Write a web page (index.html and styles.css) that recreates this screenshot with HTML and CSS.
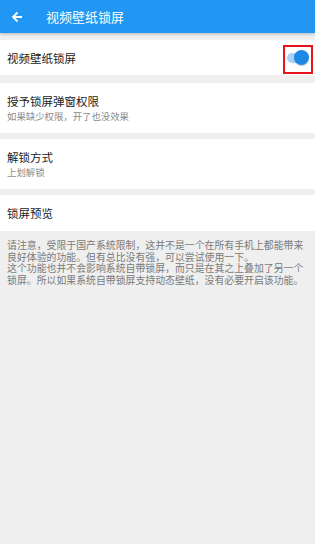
FILE: index.html
```html
<!DOCTYPE html>
<html lang="zh-CN">
<head>
<meta charset="utf-8">
<link rel="stylesheet" href="styles.css">
</head>
<body>
<div class="app">
  <header class="bar">
    <svg class="back" width="12" height="12" viewBox="0 0 12 12"><path d="M11 6H2M6.5 1.5L2 6l4.5 4.5" fill="none" stroke="#fff" stroke-width="1.8"/></svg>
    <div class="bar-title">视频壁纸锁屏</div>
  </header>
  <div class="row row-switch">
    <div class="title">视频壁纸锁屏</div>
    <div class="switch"><span class="track"></span><span class="knob"></span><span class="mark"></span></div>
  </div>
  <div class="row row-two gap8">
    <div class="title">授予锁屏弹窗权限</div>
    <div class="sub">如果缺少权限，开了也没效果</div>
  </div>
  <div class="row row-two">
    <div class="title">解锁方式</div>
    <div class="sub">上划解锁</div>
  </div>
  <div class="row row-one">
    <div class="title">锁屏预览</div>
  </div>
  <p class="note">请注意，受限于国产系统限制，这并不是一个在所有手机上都能带来良好体验的功能。但有总比没有强，可以尝试使用一下。<br>这个功能也并不会影响系统自带锁屏，而只是在其之上叠加了另一个锁屏。所以如果系统自带锁屏支持动态壁纸，没有必要开启该功能。</p>
</div>
</body>
</html>
```
FILE: styles.css
```css
html, body {
  margin: 0;
  padding: 0;
  background: #efefef;
}
body {
  font-family: "Noto Sans CJK SC", "Noto Sans", sans-serif;
  width: 315px;
  height: 544px;
  overflow: hidden;
}
.app {
  display: flex;
  flex-direction: column;
}
.bar {
  height: 33px;
  background: #2196f3;
  display: flex;
  align-items: center;
  box-shadow: 0 1px 3px rgba(0,0,0,0.25);
  position: relative;
  z-index: 1;
}
.back {
  margin-left: 11px;
  margin-top: 1px;
}
.bar-title {
  color: #fff;
  font-size: 13px;
  margin-left: 23px;
  line-height: 1;
}
.row {
  background: #fff;
  margin-top: 6px;
  padding: 0 7px;
  display: flex;
  flex-direction: column;
  justify-content: center;
}
.row-switch {
  margin-top: 7px;
  height: 35px;
  padding-right: 2px;
  flex-direction: row;
  align-items: center;
  justify-content: space-between;
}
.row-switch .title {
  margin-top: 2px;
}
.gap8 { margin-top: 8px; }
.row-two {
  height: 50px;
}
.row-one {
  height: 36px;
}
.title {
  font-size: 11.5px;
  color: #222;
  line-height: 15px;
}
.row-two .sub {
  font-size: 9.4px;
  color: #8a8a8a;
  line-height: 13px;
  margin-top: 1px;
}
.switch {
  position: relative;
  width: 26px;
  height: 16px;
}
.track {
  position: absolute;
  left: 0;
  top: 3px;
  width: 19px;
  height: 10px;
  border-radius: 5px;
  background: #a6d2f9;
}
.knob {
  position: absolute;
  left: 7px;
  top: 0;
  width: 15px;
  height: 15px;
  border-radius: 50%;
  background: #1e88e5;
  box-shadow: 0 1px 1px rgba(0,0,0,0.2);
}
.mark {
  position: absolute;
  left: -4px;
  top: -5px;
  width: 26px;
  height: 25px;
  border: 2px solid #e8141b;
}
.note {
  margin: 9px 7px 0;
  font-size: 9.88px;
  line-height: 11.5px;
  color: #7a7a7a;
}
```
